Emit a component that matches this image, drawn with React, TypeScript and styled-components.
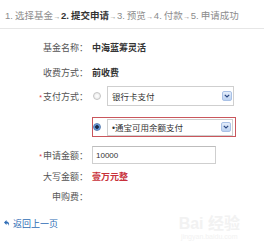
import React from "react";
import styled, { createGlobalStyle } from "styled-components";

const Global = createGlobalStyle`
  html, body { margin: 0; padding: 0; background: #fff; }
  body { font-family: "Liberation Sans", "Noto Sans CJK SC", sans-serif; }
`;

const Page = styled.div`
  position: relative;
  width: 264px;
  height: 247px;
  overflow: hidden;
`;

const Steps = styled.div`
  height: 29px;
  box-sizing: border-box;
  padding: 10px 0 0 5px;
  border-bottom: 1px solid #e6e6e6;
  font-size: 9.5px;
  line-height: 12px;
  color: #8c8c8c;
  white-space: nowrap;
`;

const Step = styled.span<{ $active?: boolean }>`
  color: ${(p) => (p.$active ? "#333" : "#8c8c8c")};
  font-weight: ${(p) => (p.$active ? 700 : 400)};
`;

const Num = styled.span`
  margin-right: 2px;
`;

const Arrow = styled.span`
  font-size: 7px;
  margin: 0 0.5px;
`;

const Form = styled.div`
  display: flex;
  flex-direction: column;
  padding-top: 6px;
`;

const Row = styled.div<{ $h: number; $mt?: number }>`
  display: flex;
  align-items: center;
  height: ${(p) => p.$h}px;
  margin-top: ${(p) => p.$mt ?? 0}px;
`;

const Label = styled.div`
  width: 88px;
  margin-right: 4px;
  text-align: right;
  font-size: 9px;
  color: #555;
  white-space: nowrap;
`;

const Req = styled.span`
  color: #e0343c;
  font-size: 7px;
  margin-right: 1px;
`;

const Value = styled.div<{ $red?: boolean }>`
  font-size: 9px;
  font-weight: 700;
  color: ${(p) => (p.$red ? "#c8303a" : "#333")};
`;

const Radio = styled.span<{ $checked?: boolean }>`
  display: inline-block;
  box-sizing: border-box;
  width: 8px;
  height: 8px;
  border-radius: 50%;
  border: 1px solid ${(p) => (p.$checked ? "#5b7fb3" : "#c4c4c4")};
  background: ${(p) =>
    p.$checked
      ? "radial-gradient(circle, #1c2a44 0 1.5px, #4f86d0 2px, #a9c8ee 100%)"
      : "radial-gradient(circle, #fff 0, #e6e6e6 100%)"};
  flex: none;
`;

const PayOption = styled.div<{ $selected?: boolean }>`
  display: flex;
  align-items: center;
  gap: 6px;
  box-sizing: border-box;
  height: 100%;
  padding: ${(p) => (p.$selected ? "0 2px 0 0" : "0 0 0 1px")};
  border: ${(p) => (p.$selected ? "1px solid #c9565c" : "none")};
`;

const Select = styled.div<{ $w: number; $h: number }>`
  position: relative;
  box-sizing: border-box;
  width: ${(p) => p.$w}px;
  height: ${(p) => p.$h}px;
  border: 1px solid #cfcfcf;
  background: #fff;
  display: flex;
  align-items: center;
  padding-left: 4px;
  font-size: 8.5px;
  color: #333;
  white-space: nowrap;
`;

const DropBtn = styled.span`
  position: absolute;
  right: 1px;
  top: 50%;
  transform: translateY(-50%);
  box-sizing: border-box;
  width: 10px;
  height: 10px;
  border: 1px solid #a9c1e6;
  border-radius: 2px;
  background: linear-gradient(#e4edfa, #bcd2f1);
  display: flex;
  align-items: center;
  justify-content: center;
`;

const Input = styled.div`
  box-sizing: border-box;
  width: 124px;
  height: 18px;
  border: 1px solid #cfcfcf;
  border-top-color: #bdbdbd;
  display: flex;
  align-items: center;
  padding-left: 3px;
  font-size: 8px;
  color: #333;
`;

const Back = styled.a`
  display: flex;
  align-items: center;
  gap: 3px;
  height: 16px;
  margin-top: 11px;
  padding-left: 4px;
  font-size: 9px;
  color: #2e6cb5;
  text-decoration: none;
`;

const Watermark = styled.div`
  position: absolute;
  right: 24px;
  bottom: 6px;
  text-align: center;
  color: #f2f2f2;
  font-size: 16px;
  line-height: 16px;
  font-weight: 700;
`;

const WatermarkSub = styled.div`
  font-size: 7px;
  line-height: 9px;
  font-weight: 400;
`;

const Chevron = () => (
  <svg width="6" height="4" viewBox="0 0 6 4">
    <path d="M0.8 0.8 L3 3 L5.2 0.8" fill="none" stroke="#2a4680" strokeWidth="1.2" />
  </svg>
);

const steps = ["选择基金", "提交申请", "预览", "付款", "申请成功"];

export default function App() {
  return (
    <Page>
      <Global />
      <Steps>
        {steps.map((s, i) => (
          <React.Fragment key={s}>
            {i > 0 && <Arrow>→</Arrow>}
            <Step $active={i === 1}>
              <Num>{i + 1}.</Num>
              {s}
            </Step>
          </React.Fragment>
        ))}
      </Steps>
      <Form>
        <Row $h={25}>
          <Label>基金名称：</Label>
          <Value>中海蓝筹灵活</Value>
        </Row>
        <Row $h={25}>
          <Label>收费方式：</Label>
          <Value>前收费</Value>
        </Row>
        <Row $h={22}>
          <Label>
            <Req>*</Req>支付方式：
          </Label>
          <PayOption>
            <Radio />
            <Select $w={127} $h={20}>
              银行卡支付
              <DropBtn>
                <Chevron />
              </DropBtn>
            </Select>
          </PayOption>
        </Row>
        <Row $h={20} $mt={10}>
          <Label />
          <PayOption $selected>
            <Radio $checked />
            <Select $w={126} $h={17}>
              •通宝可用余额支付
              <DropBtn>
                <Chevron />
              </DropBtn>
            </Select>
          </PayOption>
        </Row>
        <Row $h={18} $mt={9}>
          <Label>
            <Req>*</Req>申请金额：
          </Label>
          <Input>10000</Input>
        </Row>
        <Row $h={24}>
          <Label>大写金额：</Label>
          <Value $red>壹万元整</Value>
        </Row>
        <Row $h={16}>
          <Label>申购费：</Label>
        </Row>
      </Form>
      <Back href="#">
        <svg width="6" height="6" viewBox="0 0 6 6">
          <path d="M0 2.5 L2.5 0 L2.5 1.5 C4.5 1.5 5.5 3 5 6 C4.5 4 3.8 3.5 2.5 3.5 L2.5 5 Z" fill="#2e6cb5" />
        </svg>
        返回上一页
      </Back>
      <Watermark>
        Bai 经验
        <WatermarkSub>jingyan.baidu.com</WatermarkSub>
      </Watermark>
    </Page>
  );
}
